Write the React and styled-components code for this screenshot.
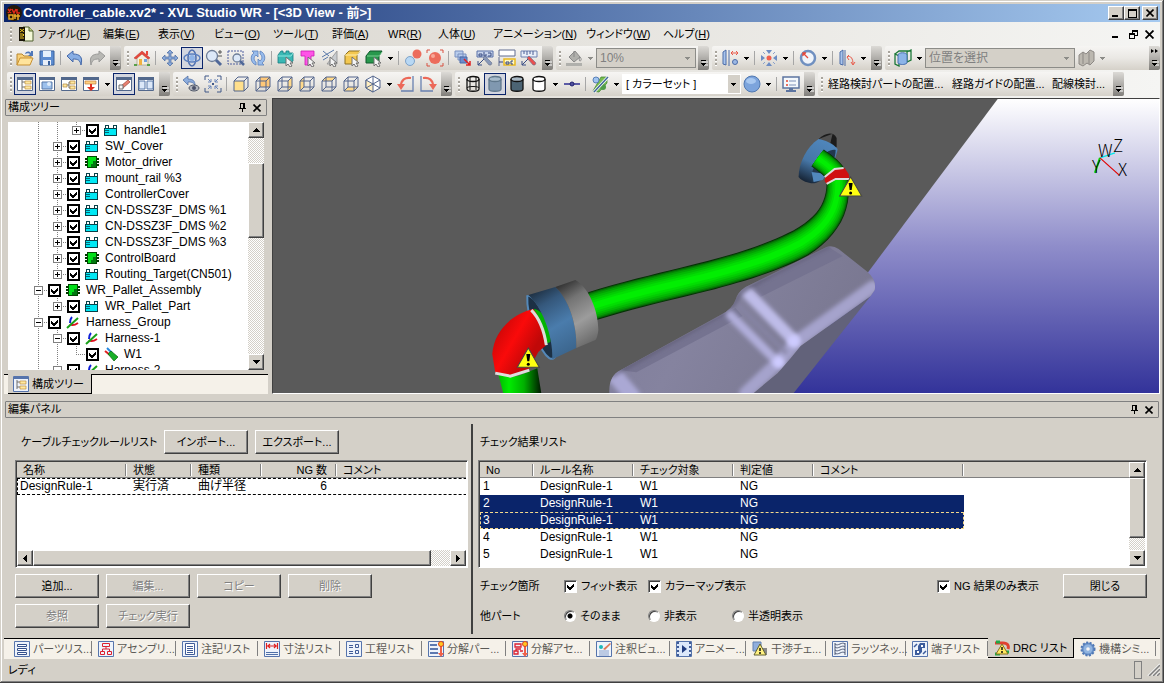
import React from "react";
import styled, { createGlobalStyle, css } from "styled-components";

const FACE = "#d4d0c8";
const SHADOW = "#808080";
const DARK = "#404040";
const NAVY = "#0a246a";

const svgUrl = (body, w, h) =>
  `url("data:image/svg+xml,${encodeURIComponent(
    `<svg xmlns='http://www.w3.org/2000/svg' width='${w}' height='${h}' shape-rendering='crispEdges'>${body}</svg>`
  )}")`;

const CHECK = svgUrl(
  "<path d='M0 2v3l2 2h1l4-4V0L3 4H2z' fill='black'/>",
  7,
  7
);
const arrowDown = (color) =>
  svgUrl(`<path d='M0 0h5v1H4v1H3v1H2V2H1V1H0z' fill='${color}'/>`, 5, 3);

const GlobalStyle = createGlobalStyle`
  * {
    box-sizing: border-box;
  }

  body {
    margin: 0;
    background: ${FACE};
    color: #000;
    font: 11px/16px "Liberation Sans", "Noto Sans CJK JP", sans-serif;
    font-feature-settings: "palt";
  }

  button, select, input {
    margin: 0;
    font: inherit;
    font-feature-settings: inherit;
    color: inherit;
  }
`;

/* ---------- toolbar icons, all on an 18px grid ---------- */

const Cube = ({ face }) => (
  <>
    {face === "front" && <path d="M2 6h10v10H2z" fill="#ffdf8c" />}
    {face === "back" && <path d="M6 2h10v10H6z" fill="#ffc878" />}
    {face === "left" && <path d="M2 6l4-4v10l-4 4z" fill="#ffd98a" />}
    {face === "right" && <path d="M12 6l4-4v10l-4 4z" fill="#ffd98a" />}
    {face === "top" && <path d="M2 6l4-4h10l-4 4z" fill="#ffd98a" />}
    {face === "bottom" && <path d="M2 16l4-4h10l-4 4z" fill="#ffd98a" />}
    <path
      d="M2 6h10v10H2zM2 6l4-4h10l-4 4M16 2v10l-4 4"
      fill="none"
      stroke="#52658c"
    />
    {face !== "front" && (
      <path d="M6 2v10h10M6 12l-4 4" fill="none" stroke="#52658c" />
    )}
  </>
);

const Cursor = () => (
  <path
    d="M9 8v9l2-2 2 3 2-1-2-3h3z"
    fill="#f4f4f4"
    stroke="#707070"
    strokeWidth="1"
  />
);

const Pencil = ({ x = 0, color = "#8898b8" }) => (
  <path d={`M${7 + x} 9l2-2 7 7-1 2-2 0z`} fill={color} stroke="#68708c" strokeWidth=".6" />
);

const Panel = ({ children }) => (
  <>
    <path d="M1.500 2.500h15v13h-15z" fill="#fff" stroke="#52688c" />
    <path d="M1 2h16v3H1z" fill="#52688c" />
    {children}
  </>
);

const Cylinder = ({ fill, stroke = "#111", top = fill, line }) => (
  <>
    <path
      d="M3 4v10c0 3 12 3 12 0V4"
      fill={fill}
      stroke={stroke}
      strokeWidth="1.300"
    />
    <ellipse cx="9" cy="4" rx="6" ry="2.500" fill={top} stroke={stroke} strokeWidth="1.300" />
    {line && (
      <path
        d="M6 2v13M12 2v13M3 13c0-2 12-2 12 0"
        fill="none"
        stroke={stroke}
      />
    )}
  </>
);

const icons = {
  open: (
    <>
      <path d="M1 16V5h5l2 2h7v3" fill="#f8d078" stroke="#b88830" />
      <path d="M1 16l3-7h13l-3 7z" fill="#ffe49c" stroke="#c89030" />
      <path d="M9 5c1-3 4-3 6-1V2l2 0v5h-5l2-2c-1-1-3-1-5 0z" fill="#5078b8" />
    </>
  ),
  save: (
    <>
      <path d="M2 2h14v14H2z" fill="#5c8cd0" stroke="#38609c" />
      <path d="M5 2h8v6H5z" fill="#e4f0fc" />
      <path d="M5 11h8v5H5z" fill="#e8eef8" />
      <path d="M10 12h2v4h-2z" fill="#38609c" />
    </>
  ),
  undo: (
    <path
      d="M1 7l6-5v3c7 0 10 3 8 11-1-5-3-6-8-6v3z"
      fill="#88aee4"
      stroke="#4468a8"
    />
  ),
  redo: (
    <path
      d="M17 7l-6-5v3c-7 0-10 3-8 11 1-5 3-6 8-6v3z"
      fill="#b8b8b4"
      stroke="#9a9a98"
    />
  ),
  home: (
    <>
      <path d="M4 8v8h11V8L9 4z" fill="#f4f0e0" stroke="#a09880" strokeWidth=".7" />
      <path d="M1 9l8-7 8 7-2 1-6-5-6 5z" fill="#e8483c" stroke="#b83028" strokeWidth=".5" />
      <path d="M13 2h2v4h-2z" fill="#e8483c" />
      <path d="M6 10h3v6H6z" fill="#f0b040" />
      <path d="M11 10h3v3h-3z" fill="#70a0e0" />
      <path d="M1 15h3v2H1zM14 15h3v2h-3z" fill="#58a048" />
    </>
  ),
  move: (
    <path
      d="M9 1l3 3h-2v4h4V6l3 3-3 3v-2h-4v4h2l-3 3-3-3h2v-4H4v2L1 9l3-3v2h4V4H6z"
      fill="#88a8d8"
      stroke="#4868a0"
      strokeWidth=".7"
    />
  ),
  rotate: (
    <>
      <circle cx="9" cy="9" r="3" fill="#8fb4e8" />
      <ellipse cx="9" cy="9" rx="4" ry="8" fill="none" stroke="#5070b0" strokeWidth="1.500" />
      <ellipse cx="9" cy="9" rx="8" ry="4" fill="none" stroke="#5c80c0" strokeWidth="1.500" />
    </>
  ),
  zoom: (
    <>
      <circle cx="7" cy="7" r="5.500" fill="#dce8f8" stroke="#6e7e98" strokeWidth="1.300" />
      <path d="M11 11l5 5" stroke="#506898" strokeWidth="3" />
      <path d="M13 3h4M15 1v4M13 7h4" stroke="#555" />
    </>
  ),
  zoomArea: (
    <>
      <path d="M1 2h15v13H1z" fill="none" stroke="#5060a0" strokeDasharray="2 1" />
      <circle cx="10" cy="9" r="4" fill="#dce8f8" stroke="#6e7e98" strokeWidth="1.300" />
      <path d="M13 12l4 4" stroke="#506898" strokeWidth="2.500" />
    </>
  ),
  reload: (
    <>
      <path d="M7 16C1 14 1 6 5 4L3 2h6v6L7 6c-3 2-2 6 0 7z" fill="#98bcec" stroke="#5c80bc" strokeWidth=".8" />
      <path d="M11 2c6 2 6 10 2 12l2 2H9v-6l2 2c3-2 2-6 0-7z" fill="#98bcec" stroke="#5c80bc" strokeWidth=".8" />
    </>
  ),
  pickPart: (
    <>
      <path d="M1 6l3-4h2v2h3V2h3v2h4v8l-3 2H1z" fill="#3ab8b4" stroke="#187c80" strokeWidth=".8" />
      <path d="M1 7h13l2-3" fill="none" stroke="#8ce8e0" />
      <Cursor />
    </>
  ),
  pickShape: (
    <>
      <path d="M2 2h13v5h-3v9H6V7H2z" fill="#ff54e8" stroke="#c820b0" strokeWidth=".8" />
      <Cursor />
    </>
  ),
  pickLine: (
    <>
      <path d="M16 2v13H6z" fill="#c8ccd0" stroke="#909090" strokeWidth=".8" />
      <path d="M2 2l6 5M1 8L13 1M2 11l5-3" stroke="#5878a8" />
      <Cursor />
    </>
  ),
  pickFace: (
    <>
      <path d="M2 6l4-4h11l-3 4v9H2z" fill="#f4c850" stroke="#8c7020" />
      <path d="M2 6h12l3-4" fill="none" stroke="#fff0b0" />
      <Cursor />
    </>
  ),
  pickBody: (
    <>
      <path d="M1 7l4-5h12l-3 5v7H1z" fill="#28984c" stroke="#10582c" />
      <path d="M2 7h12l3-4" fill="none" stroke="#78d090" />
      <Cursor />
    </>
  ),
  balls: (
    <>
      <circle cx="13" cy="5" r="4.500" fill="#ec6c5c" />
      <circle cx="6" cy="12" r="4.500" fill="#b8d8f4" stroke="#6c94c0" strokeWidth=".8" />
    </>
  ),
  ballFit: (
    <>
      <circle cx="9" cy="9" r="6" fill="#ec6c5c" />
      <circle cx="7" cy="7" r="2" fill="#f8a898" />
      <path d="M1 4V1h3M14 1h3v3M17 14v3h-3M4 17H1v-3" fill="none" stroke="#d85040" />
    </>
  ),
  layers: (
    <>
      <path d="M1 2h8v6H1zM4 5h8v6H4z" fill="#b8ccec" stroke="#7890c0" />
      <path d="M6 8h7v6H6z" fill="#6c8ccc" stroke="#4868a8" />
      <path d="M10 10l6 6M16 12v4h-4" stroke="#e02020" strokeWidth="1.500" fill="none" />
    </>
  ),
  noteEdit: (
    <>
      <path d="M1 2h16v6H1z" fill="#c8d4ec" stroke="#5870a8" />
      <path d="M3 5h3v2H3zM8 3v4h2V5M12 4h3v3h-3" fill="none" stroke="#384c84" />
      <path d="M2 16l6-6M2 12v4h4" fill="none" stroke="#384c84" />
      <Pencil />
    </>
  ),
  noteLabel: (
    <>
      <path d="M1 1h16v6H1z" fill="#fff" stroke="#606c90" />
      <path d="M1 8v9" stroke="#606c90" />
      <path d="M6 10h11v6H6z" fill="#fff8c0" stroke="#e8b820" strokeWidth="1.500" />
      <path d="M8 13h3v2H8zM15 12h-2v3h2M1 13h4" fill="none" stroke="#304080" />
    </>
  ),
  measure: (
    <>
      <path d="M1 2h16v6H1z" fill="#e8eef8" stroke="#6c80b0" />
      <path d="M4 2v3M7 2v4M10 2v3M13 2v4" stroke="#485c94" />
      <path d="M2 16l6-6M2 12v4h4" fill="none" stroke="#384c84" />
      <Pencil color="#e85050" />
    </>
  ),
  bucket: (
    <>
      <path d="M4 8l6-6 5 6-6 5z" fill="#b0b0ac" stroke="#888" />
      <path d="M9 2v6M15 8c2 2 1 4 0 4s-1-2 0-4" fill="none" stroke="#888" />
      <path d="M1 14h16v3H1z" fill="#b0b0ac" />
    </>
  ),
  alignGap: (
    <>
      <path d="M2 3l3-2v15l-3-1z" fill="#a8c4ec" stroke="#4c6ca8" />
      <path d="M8 1v16" stroke="#4c6ca8" />
      <path d="M10 4h7M12 2l-2 2 2 2M15 2l2 2-2 2" fill="none" stroke="#e85848" />
      <circle cx="14" cy="13" r="2.500" fill="#9cb8e4" stroke="#4c6ca8" />
    </>
  ),
  gather: (
    <>
      <path d="M6 1h6L9 5zM6 17h6l-3-4zM1 6v6l4-3zM17 6v6l-4-3z" fill="#6c8cc4" />
      <circle cx="9" cy="9" r="2.500" fill="#f06050" />
      <path d="M3 3l2 2M15 3l-2 2M3 15l2-2M15 15l-2-2" stroke="#88a0cc" />
    </>
  ),
  dial: (
    <>
      <circle cx="9" cy="9" r="7" fill="#f0f4fa" stroke="#7090c0" strokeWidth="2.500" />
      <path d="M9 9L4 4M4 7V4h3" stroke="#e84838" strokeWidth="1.300" fill="none" />
    </>
  ),
  alignTurn: (
    <>
      <path d="M2 3l3-2v15l-3-1z" fill="#a8c4ec" stroke="#4c6ca8" />
      <path d="M7 1v16" stroke="#4c6ca8" />
      <path d="M9 8c4-2 6 2 6 7M11 6L9 8l2 3M13 13l2 3 2-3" fill="none" stroke="#e85848" />
    </>
  ),
  section: (
    <>
      <path d="M1 5l4 2v10l-4-2zM13 3l4-2v10l-4 2zM1 5l4-3h12" fill="none" stroke="#1c7838" strokeWidth="1.300" />
      <path d="M4 6c0-3 9-3 9 0v8c-2 2-7 2-9 0z" fill="#8cb4e8" stroke="#4870b0" />
    </>
  ),
  sectionOff: (
    <>
      <path d="M2 6l4-3 3 2 4-4 4 2v9l-4 4-3-2-4 3-4-2z" fill="#bcb8b0" stroke="#8c8884" />
      <path d="M6 3v12M12 3v12" stroke="#8c8884" />
    </>
  ),
  winTree: (
    <Panel>
      <path d="M6 5v10M6 7h3M6 12h3" fill="none" stroke="#707070" />
      <path d="M9 6h6v3H9zM9 11h6v3H9z" fill="#ffe8a0" stroke="#c09040" strokeWidth=".7" />
    </Panel>
  ),
  winImage: (
    <Panel>
      <path d="M4 7h10v7H4z" fill="#9cc0ec" stroke="#5878a8" />
      <circle cx="11" cy="9" r="2" fill="#e0ecfa" />
    </Panel>
  ),
  winFlow: (
    <Panel>
      <path d="M6 10h3V7h2M9 10v3h2" fill="none" stroke="#707070" />
      <path d="M3 9h4v3H3zM10 6h5v3h-5zM10 11h5v3h-5z" fill="#ffe8a0" stroke="#b08840" strokeWidth=".7" />
    </Panel>
  ),
  winDown: (
    <Panel>
      <path d="M3 6h11v3H3z" fill="#ffd080" stroke="#c08040" strokeWidth=".7" />
      <path d="M8 9h2v3h3l-4 4-4-4h3z" fill="#e03020" />
    </Panel>
  ),
  winEdit: (
    <Panel>
      <path d="M6 11l7-6 2 2-7 6z" fill="#e88070" stroke="#984838" strokeWidth=".7" />
      <path d="M4 10h4v4H4z" fill="#f4f4f4" stroke="#707070" />
    </Panel>
  ),
  winBook: (
    <Panel>
      <path d="M2 6h6v8H2zM10 6h6v8h-6z" fill="#dce8f8" stroke="#5878a8" />
    </Panel>
  ),
  look: (
    <>
      <path d="M1 5l5-4v3c5 0 7 2 7 6-2-3-4-3-7-3v3z" fill="#8cacdc" stroke="#4868a0" strokeWidth=".7" />
      <ellipse cx="12" cy="13" rx="5" ry="3" fill="#b0b4bc" stroke="#505868" />
      <circle cx="12" cy="13" r="2" fill="#485068" />
    </>
  ),
  fit: (
    <>
      <path d="M1 5V1h4M13 1h4v4M17 13v4h-4M5 17H1v-4" fill="none" stroke="#405888" />
      <path d="M4 4l3 3M14 4l-3 3M4 14l3-3M14 14l-3-3M4 7h3V4M11 4v3h3M4 11h3v3M11 14v-3h3" fill="none" stroke="#6c88bc" />
      <path d="M8 8h2v2H8z" fill="#405888" />
    </>
  ),
  front: <Cube face="front" />,
  back: <Cube face="back" />,
  left: <Cube face="left" />,
  right: <Cube face="right" />,
  top: <Cube face="top" />,
  bottom: <Cube face="bottom" />,
  iso: (
    <>
      <path d="M9 1l7 4v8l-7 4-7-4V5z" fill="#fff" stroke="#52658c" />
      <path d="M2 5l7 4v8l-7-4z" fill="#ffeec0" stroke="#52658c" />
      <path d="M9 9l7-4M9 9V1M9 9l7 4M9 9l-7 4" fill="none" stroke="#52658c" />
    </>
  ),
  turnLeft: (
    <>
      <path d="M16 1v15H4" fill="none" stroke="#6880b0" strokeWidth="1.300" />
      <path d="M14 3C8 2 4 5 4 11" fill="none" stroke="#ec6858" strokeWidth="2.200" />
      <path d="M0 9h8l-4 6z" fill="#ec6858" />
    </>
  ),
  turnRight: (
    <>
      <path d="M2 1v15h12" fill="none" stroke="#6880b0" strokeWidth="1.300" />
      <path d="M4 3c6-1 10 2 10 8" fill="none" stroke="#ec6858" strokeWidth="2.200" />
      <path d="M10 9h8l-4 6z" fill="#ec6858" />
    </>
  ),
  wire: <Cylinder fill="none" line />,
  shade: <Cylinder fill="#8098b0" top="#a8bccc" stroke="#60788c" />,
  shadeEdge: <Cylinder fill="#4c6474" top="#a8b8c4" />,
  hidden: <Cylinder fill="#fff" />,
  point: (
    <>
      <path d="M1 9h16" stroke="#2c2c90" strokeWidth="1.300" />
      <circle cx="9" cy="9" r="2" fill="#50509c" stroke="#202070" />
    </>
  ),
  colorMap: (
    <>
      <path d="M2 16l8-14h6v6L8 17z" fill="#78bc50" stroke="#388028" strokeWidth=".7" />
      <circle cx="5" cy="5" r="3" fill="#a0c4f0" stroke="#5880b8" />
      <circle cx="12" cy="12" r="3" fill="#509c48" />
      <path d="M3 17L17 2" stroke="#fff" strokeWidth="3" />
      <path d="M3 17L17 2" stroke="#406898" strokeWidth="1.500" />
    </>
  ),
  ball: (
    <>
      <circle cx="9" cy="9" r="8" fill="#7ca4dc" stroke="#5078b0" />
      <ellipse cx="8" cy="6" rx="5" ry="3" fill="#a8c8f0" />
    </>
  ),
  monitor: (
    <>
      <path d="M1 2h16v11H1z" fill="#f4f8fc" stroke="#5c74a0" strokeWidth="1.500" />
      <path d="M4 5h2v2H4zM4 9h2v2H4z" fill="#e87060" />
      <path d="M7 6h7M7 10h7" stroke="#7c90b8" />
      <path d="M7 13h4v2h3v2H4v-2h3z" fill="#5c74a0" />
    </>
  ),
};

/* ---------- list tab icons, 16px grid ---------- */

const tabFrame = (
  <path d="M.5.5h15v15H.5z" fill="#eef3fb" stroke="#5674ac" />
);

const tabIcons = {
  parts: (
    <>
      {tabFrame}
      <path d="M3.500 3.500h9v2h-9zM3.500 7.500h9v2h-9zM3.500 11.500h9v2h-9z" fill="#fff" stroke="#34508c" />
    </>
  ),
  assembly: (
    <>
      {tabFrame}
      <path d="M4.500 2.500h7v3h-7zM2.500 10.500h4v3h-4zM9.500 10.500h4v3h-4zM8 6v2M4.500 10V8h7v2" fill="none" stroke="#dc2030" />
    </>
  ),
  notes: (
    <>
      {tabFrame}
      <path d="M3.500 2.500h9v11h-9z" fill="#fff" stroke="#405c98" />
      <path d="M5 5.500h6M5 7.500h6M5 9.500h6M5 11.500h6" stroke="#405c98" />
    </>
  ),
  dims: (
    <>
      {tabFrame}
      <path d="M2.500 2v6M13.500 2v6M3 5h10M6 3L4 5l2 2M10 3l2 2-2 2" fill="none" stroke="#e02020" strokeWidth="1.200" />
      <path d="M2 11.500h12M2 13.500h12" stroke="#5070a8" />
    </>
  ),
  process: (
    <>
      {tabFrame}
      <path d="M3 4.500h4M3 6.500h4M3 10.500h4M3 12.500h4" stroke="#405c98" />
      <path d="M9.500 3.500h3v3h-3zM9.500 9.500h3v3h-3z" fill="none" stroke="#405c98" />
    </>
  ),
  explodeParts: (
    <>
      {tabFrame}
      <path d="M2 3h7v2H2zM2 7h8v2H2zM2 11h8v2H2z" fill="#5c78b0" />
      <path d="M12 5h2v7h2l-3 4-3-4h2z" fill="#f06048" />
      <circle cx="13" cy="3" r="2.500" fill="#ffc820" stroke="#e04020" />
    </>
  ),
  explodeAsm: (
    <>
      {tabFrame}
      <path d="M3 3h6v3H3zM2 10h4v3H2zM8 10h3M4 10V8h5" fill="none" stroke="#dc2030" strokeWidth="1.300" />
      <path d="M12 5h2v7h2l-3 4-3-4h2z" fill="#f06048" />
      <circle cx="13" cy="3" r="2.500" fill="#ffc820" stroke="#e04020" />
    </>
  ),
  annotView: (
    <>
      {tabFrame}
      <path d="M3 10h10M3 12h10M3 14h10" stroke="#88a0cc" />
      <circle cx="5" cy="6" r="2" fill="#20b8b8" />
      <path d="M7 8l7-6 1 1-6 6z" fill="#e07858" />
    </>
  ),
  anime: (
    <>
      <path d="M.5.5h15v15H.5z" fill="#dce8fa" stroke="#5674ac" />
      <path d="M2 1v14M14 1v14" stroke="#405c98" strokeDasharray="2 2" strokeWidth="2" />
      <path d="M6 4l5 4-5 4z" fill="#203c80" />
    </>
  ),
  clash: (
    <>
      <path d="M1 1h8v9H1z" fill="#90aedc" stroke="#6080b0" />
      <path d="M10 7h5v7h-5z" fill="#888" />
      <path d="M8 3l6 11H2z" fill="#fff080" stroke="#606030" />
      <path d="M8 7v3M8 11v2" stroke="#111" strokeWidth="1.500" />
    </>
  ),
  ratsnest: (
    <>
      {tabFrame}
      <path d="M3 3c3 3 7-3 10 0M3 6c3 3 7-3 10 0M3 9c3 3 7-3 10 0M3 12c3 3 7-3 10 0M3 2v12M13 2v12" fill="none" stroke="#505c78" />
    </>
  ),
  terminal: (
    <>
      {tabFrame}
      <path d="M8 2h5v5h-3v4L7 14H3V9h3V5z" fill="#3c5c9c" />
      <path d="M9 4h2v2H9zM5 10h2v2H5z" fill="#fff" />
      <path d="M2 6l3-3M11 13l3-3" stroke="#3c5c9c" strokeWidth="1.500" />
    </>
  ),
  drc: (
    <>
      <path d="M1 3h8c5 0 6 3 5 6" fill="none" stroke="#e04030" strokeWidth="3" />
      <path d="M2 2h4M12 12h3M1 14h5" stroke="#20a848" strokeWidth="3" />
      <path d="M8 4l6 10H2z" fill="#ffe860" stroke="#887020" />
      <path d="M8 7v3M8 11v2" stroke="#111" strokeWidth="1.500" />
    </>
  ),
  gear: (
    <>
      <circle cx="8" cy="8" r="6.500" fill="#6890c8" stroke="#5078b4" strokeWidth="2" strokeDasharray="2 1.500" />
      <circle cx="8" cy="8" r="4.500" fill="#90b4e0" />
      <circle cx="8" cy="8" r="1.800" fill="#f4f4f4" />
    </>
  ),
  tree: (
    <>
      {tabFrame}
      <path d="M1 1h14v2H1z" fill="#5674ac" />
      <path d="M4 4v9M4 6h3M4 11h3" fill="none" stroke="#707070" />
      <path d="M7 5h6v3H7zM7 10h6v3H7z" fill="#ffe8a0" stroke="#c09040" strokeWidth=".7" />
    </>
  ),
};

const treeIcons = {
  part: (
    <g shapeRendering="crispEdges">
      <path d="M1 2h4v3H1zM9 2h4v3H9zM0 5h13v8H0z" fill="#084048" />
      <path d="M2 3h2v2H2zM10 3h2v2h-2z" fill="#fff" />
      <path d="M1 6h11v6H1z" fill="#00e8f4" />
      <path d="M1 7h4v1H1zM1 9h4v1H1z" fill="#006878" />
    </g>
  ),
  assy: (
    <g shapeRendering="crispEdges">
      <path d="M0 3h14v2H0zM0 6h14v2H0zM0 9h14v2H0z" fill="#003800" />
      <path d="M2 1h10v12H2z" fill="#004800" />
      <path d="M3 2h8v10H3z" fill="#00e018" />
      <path d="M6 12V9h2V6h3v6z" fill="#007810" />
    </g>
  ),
  harness: (
    <>
      <path d="M6 2c-2 2-2 3-2 6" fill="none" stroke="#1020d8" strokeWidth="2" />
      <path d="M4 9c2 2 5 1 8-1" fill="none" stroke="#e01020" strokeWidth="2" />
      <path d="M1 13L12 3" stroke="#18a018" strokeWidth="2" />
    </>
  ),
  wire: (
    <>
      <path d="M1 4l5 4" stroke="#e02020" strokeWidth="2" />
      <path d="M3 1l5 5" stroke="#2888e0" strokeWidth="2" />
      <path d="M4 7l3-3 7 6-4 4z" fill="#18b028" stroke="#086010" strokeWidth=".7" />
    </>
  ),
};

const Svg = styled.svg`
  display: block;
  flex: none;
`;

const Icon = ({ name }) => (
  <Svg width="18" height="18" viewBox="0 0 18 18" aria-hidden="true">
    {icons[name]}
  </Svg>
);

/* ---------- window frame ---------- */

const Window = styled.div`
  display: flex;
  flex-direction: column;
  height: 100vh;
  min-height: 560px;
  padding: 4px 4px 3px;
  background: ${FACE};
  box-shadow: inset -1px -1px ${DARK}, inset 1px 1px ${FACE},
    inset -2px -2px ${SHADOW}, inset 2px 2px #fff;
  overflow: hidden;
`;

const TitleBar = styled.header`
  display: flex;
  align-items: center;
  flex: none;
  height: 18px;
  padding: 0 2px;
  background: linear-gradient(90deg, ${NAVY}, #a6caf0);
  color: #fff;

  h1 {
    flex: 1;
    margin: 0 0 0 1px;
    font-size: 13px;
    line-height: 18px;
    white-space: nowrap;
  }
`;

const raised = css`
  border: 1px solid;
  border-color: #fff ${DARK} ${DARK} #fff;
  box-shadow: inset -1px -1px ${SHADOW};
  background: ${FACE};
`;

const sunken = css`
  border: 1px solid;
  border-color: ${SHADOW} #fff #fff ${SHADOW};
  box-shadow: inset 1px 1px ${DARK};
`;

const CaptionButton = styled.button`
  ${raised}
  display: grid;
  place-items: center;
  width: 16px;
  height: 14px;
  padding: 0;
  margin-left: ${({ $spaced }) => ($spaced ? "2px" : 0)};
`;

const MenuBar = styled.nav`
  display: flex;
  align-items: center;
  flex: none;
  height: 24px;
  padding: 0 4px 0 3px;
  background: linear-gradient(90deg, #d6d2ca, #f5f5f3);
`;

const MenuItem = styled.button`
  flex: none;
  width: ${({ $width }) => $width}px;
  padding: 0;
  border: 0;
  background: none;
  text-align: left;
  white-space: nowrap;
`;

const FlatButton = styled.button`
  display: grid;
  place-items: center;
  width: ${({ $width }) => $width || 18}px;
  height: 16px;
  padding: 0;
  border: 0;
  background: none;
`;

const Spacer = styled.div`
  flex: 1;
`;

/* ---------- toolbars ---------- */

const ToolbarArea = styled.div`
  display: grid;
  gap: 2px;
  flex: none;
  padding: 0 0 2px 3px;
  background: linear-gradient(90deg, #d6d2ca, #f5f5f3);
`;

const ToolbarRow = styled.div`
  display: flex;
  gap: 3px;
  height: 24px;
`;

const Toolbar = styled.div`
  display: flex;
  align-items: center;
  flex: ${({ $grow }) => ($grow ? "1" : "none")};
  min-width: 0;
  border-radius: 2px;
  background: linear-gradient(#f6f5f3, #eae8e4 50%, #d5d1c9);
  overflow: hidden;
`;

const Grip = styled.span`
  flex: none;
  width: 7px;
  height: 15px;
  background: repeating-linear-gradient(#a8a49c 0 2px, #fff 2px 3px, transparent 3px 4px)
    3px 0 / 2px 100% no-repeat;
`;

const ToolButton = styled.button`
  display: grid;
  place-items: center;
  flex: none;
  width: 22px;
  height: 22px;
  padding: 0;
  border: 1px solid ${({ $active }) => ($active ? NAVY : "transparent")};
  background: ${({ $active }) => ($active ? "#d3d6df" : "none")};
`;

const TextButton = styled.button`
  flex: none;
  width: ${({ $width }) => $width}px;
  padding: 0 0 0 3px;
  border: 0;
  background: none;
  text-align: left;
  white-space: nowrap;
`;

const Caret = styled.button`
  flex: none;
  width: 11px;
  height: 22px;
  padding: 0;
  border: 0;
  background: ${({ disabled }) => arrowDown(disabled ? "#8c8c88" : "#000")} center
    no-repeat;
`;

const Separator = styled.span`
  flex: none;
  width: 6px;
  height: 14px;
  background: linear-gradient(#a6a6a6, #a6a6a6) 2px 0 / 1px 100% no-repeat;
`;

const Overflow = styled.button`
  display: grid;
  justify-items: center;
  align-content: end;
  flex: none;
  width: 11px;
  height: 24px;
  margin-left: 2px;
  padding: 0 0 3px;
  border: 0;
  background: linear-gradient(#dcdad6, #a8a6a2 60%, #807e7a);
`;

const ToolSelect = styled.select`
  flex: none;
  width: ${({ $width }) => $width}px;
  height: 20px;
  padding: 0 14px 0 3px;
  border: 1px solid ${({ disabled }) => (disabled ? "#8c8c88" : "#fff")};
  border-radius: 0;
  appearance: none;
  background: ${({ disabled }) =>
    disabled
      ? `${arrowDown("#8c8c88")} right 5px center no-repeat ${FACE}`
      : `${arrowDown("#000")} right 4px center no-repeat, linear-gradient(${FACE}, ${FACE}) right / 12px 100% no-repeat #fff`};
  color: ${({ disabled }) => (disabled ? "#808080" : "#000")};
  font-size: ${({ disabled }) => (disabled ? "12px" : "11px")};
  opacity: 1;
`;

const More = ({ wide }) => (
  <Overflow aria-label="ツールバー オプション">
    <Svg width="9" height={wide ? 18 : 7} viewBox={`0 0 9 ${wide ? 18 : 7}`} aria-hidden="true">
      {wide && <path d="M1 0l3 2-3 2zM5 0l3 2-3 2z" fill="#000" />}
      <g transform={`translate(0 ${wide ? 11 : 0})`}>
        <path d="M3 2h6M4 5h5" stroke="#fff" />
        <path d="M2 0h5v1H2zM2 3h5v1H6v1H5v1H4V5H3V4H2z" fill="#000" />
      </g>
    </Svg>
  </Overflow>
);

const Tools = ({ items }) =>
  items.map((item, i) => {
    if (item === "|") return <Separator key={i} />;
    if (item === "v") return <Caret key={i} aria-label="メニュー" />;
    const active = item.startsWith("*");
    const name = active ? item.slice(1) : item;
    return (
      <ToolButton key={i} $active={active} aria-label={name} aria-pressed={active}>
        <Icon name={name} />
      </ToolButton>
    );
  });

/* ---------- docked panes ---------- */

const Main = styled.main`
  display: flex;
  flex: 1;
  gap: 4px;
  min-height: 0;
`;

const TreePane = styled.section`
  display: flex;
  flex-direction: column;
  flex: none;
  width: 264px;
  padding-top: 1px;
`;

const PaneHeader = styled.div`
  display: flex;
  align-items: center;
  flex: none;
  height: 17px;
  margin: 0 1px;
  padding: 0 2px;
  border: 1px solid ${SHADOW};
  border-radius: 1px;

  h2 {
    flex: 1;
    margin: 0;
    font-size: 11px;
    font-weight: normal;
    line-height: 15px;
  }
`;

const TreeFrame = styled.div`
  display: flex;
  flex: 1;
  min-height: 0;
  margin: 6px 4px 4px;
  background: #fff;
`;

const Tree = styled.ul`
  flex: 1;
  margin: 0;
  padding: 0 0 0 21px;
  font-size: 12px;
  list-style: none;
  overflow: hidden;
`;

const TreeRow = styled.li`
  display: flex;
  align-items: center;
  height: 16px;

  label {
    display: flex;
    align-items: center;
    gap: 5px;
    white-space: nowrap;
  }
`;

const vDots = "repeating-linear-gradient(#808080 0 1px, transparent 1px 2px)";
const hDots = "repeating-linear-gradient(90deg, #808080 0 1px, transparent 1px 2px)";

const Guide = styled.span`
  display: grid;
  place-items: center start;
  flex: none;
  width: 19px;
  height: 16px;
  padding-left: 5px;
  background-repeat: no-repeat;
  background-image: ${({ $line }) =>
    ({ through: vDots, node: `${vDots}, ${hDots}`, end: `${vDots}, ${hDots}` }[$line] ||
    "none")};
  background-position: 9px 0, 9px 8px;
  background-size: ${({ $line }) => ($line === "end" ? "1px 8px" : "1px 100%")}, 10px 1px;
`;

const Expander = styled.button`
  display: grid;
  place-items: center;
  width: 9px;
  height: 9px;
  padding: 0;
  border: 1px solid ${SHADOW};
  background: #fff;
`;

const TreeCheck = styled.input.attrs({ type: "checkbox" })`
  width: 13px;
  height: 13px;
  appearance: none;
  border: 2px solid #000;
  background: #fff ${CHECK} center no-repeat;
`;

const VScroll = styled.div`
  display: flex;
  flex-direction: column;
  flex: none;
  width: 16px;
  background: repeating-conic-gradient(#fff 0 25%, ${FACE} 0 50%) 0 0 / 2px 2px;
`;

const HScroll = styled(VScroll)`
  flex-direction: row;
  width: auto;
  height: 16px;
`;

const ScrollButton = styled.button`
  ${raised}
  display: grid;
  place-items: center;
  flex: none;
  width: 16px;
  height: 16px;
  padding: 0;
`;

const Thumb = styled.div`
  ${raised}
  flex: ${({ $size }) => $size} 1 0;
`;

const Track = styled.div`
  flex: ${({ $size }) => $size} 1 0;
`;

const arrows = {
  up: "M3 0h1v1h1v1h1v1h1v1H0V3h1V2h1V1h1z",
  down: "M0 0h7v1H6v1H5v1H4v1H3V3H2V2H1V1H0z",
  left: "M4 0v7H3V6H2V5H1V4H0V3h1V2h1V1h1V0z",
  right: "M0 0h1v1h1v1h1v1h1v1H3v1H2v1H1v1H0z",
};

const Arrow = ({ dir }) => (
  <ScrollButton aria-label={dir}>
    <Svg
      width={dir === "up" || dir === "down" ? 7 : 4}
      height={dir === "up" || dir === "down" ? 4 : 7}
      shapeRendering="crispEdges"
      aria-hidden="true"
    >
      <path d={arrows[dir]} />
    </Svg>
  </ScrollButton>
);

const PaneTabs = styled.div`
  display: flex;
  flex: none;
  height: 20px;
  padding-left: 4px;
  background: #f5f1e9;
  border-top: 1px solid #000;
`;

const PaneTab = styled.button`
  display: flex;
  align-items: center;
  gap: 3px;
  width: 84px;
  height: 20px;
  margin-top: -1px;
  padding: 0 5px;
  border: solid #000;
  border-width: 0 1px 1px 0;
  background: ${FACE};
  white-space: nowrap;
`;

const View = styled.section`
  flex: 1;
  min-width: 0;
  border: 1px solid;
  border-color: ${DARK} #fff #fff ${DARK};
  background: linear-gradient(#fff, #8f8dca 50%, #33339a);

  svg {
    display: block;
    width: 100%;
    height: 100%;
  }
`;

/* ---------- edit panel ---------- */

const EditPanel = styled.section`
  flex: none;
  margin-top: 7px;
`;

const EditBody = styled.div`
  display: grid;
  grid-template-columns: 467fr 3px 686fr;
  padding: 6px 0 4px;
`;

const Divider = styled.div`
  background: linear-gradient(90deg, ${DARK} 2px, ${FACE} 2px);
`;

const Column = styled.div`
  display: flex;
  flex-direction: column;
  gap: 6px;
  min-width: 0;
  padding: 6px ${({ $right }) => ($right ? "13px 6px 4px" : "3px 6px 11px")};
`;

const Line = styled.div`
  display: flex;
  align-items: center;
  gap: 7px;
  height: 24px;
`;

const Caption = styled.span`
  flex: none;
  width: ${({ $width }) => $width || "auto"};
  padding-left: ${({ $inset }) => $inset || 0}px;
  white-space: nowrap;
`;

const PushButton = styled.button`
  ${raised}
  flex: none;
  width: 84px;
  height: 24px;
  padding: 0;
  white-space: nowrap;

  &:disabled {
    color: ${SHADOW};
    text-shadow: 1px 1px #fff;
  }
`;

const ListFrame = styled.div`
  ${sunken}
  display: flex;
  flex-direction: ${({ $column }) => ($column ? "column" : "row")};
  height: 108px;
  padding: 1px;
  background: #fff;
`;

const ListView = styled.div`
  flex: 1;
  min-height: 0;
  min-width: 0;
  overflow: hidden;
  background: linear-gradient(${FACE} 15px, ${SHADOW} 15px 16px, transparent 16px);
`;

const Table = styled.table`
  width: ${({ $width }) => $width}px;
  table-layout: fixed;
  border-collapse: collapse;

  th,
  td {
    height: 17px;
    padding: 0 7px 0 3px;
    font-weight: normal;
    line-height: 15px;
    text-align: left;
    white-space: nowrap;
  }

  th {
    height: 16px;
    padding: 0 7px 0 6px;
    background: linear-gradient(${SHADOW}, ${SHADOW}) right 1px top 2px / 1px 12px
        no-repeat,
      linear-gradient(#fff, #fff) right 2px / 1px 12px no-repeat;
  }

  td {
    font-size: 12px;
  }

  td + td {
    padding-left: 6px;
  }

  .num {
    padding-right: 10px;
    text-align: right;
  }
`;

const Row = styled.tr`
  background: ${({ $selected }) => ($selected ? NAVY : "#fff")};
  color: ${({ $selected }) => ($selected ? "#fff" : "#000")};
  outline: ${({ $focused, $selected }) =>
    $focused ? `1px dashed ${$selected ? "#f5d98c" : "#000"}` : "none"};
  outline-offset: -1px;
`;

const Option = styled.label`
  display: flex;
  align-items: center;
  gap: 4px;
  min-width: ${({ $wide }) => ($wide ? "119px" : "84px")};
  white-space: nowrap;

  & + & {
    margin-left: -7px;
  }
`;

const Check = styled.input.attrs({ type: "checkbox" })`
  ${sunken}
  width: 13px;
  height: 13px;
  appearance: none;
  background: #fff ${CHECK} center no-repeat;
`;

const Radio = styled.input.attrs({ type: "radio" })`
  width: 12px;
  height: 12px;
  appearance: none;
  border: 1px solid;
  border-color: ${SHADOW} #fff #fff ${SHADOW};
  border-radius: 50%;
  box-shadow: inset 1px 1px ${DARK};
  background: #fff;

  &:checked {
    background: radial-gradient(circle, #000 2px, #fff 3px);
  }
`;

const BottomTabs = styled.div`
  display: flex;
  flex: none;
  height: 21px;
  padding-left: 4px;
  border-top: 1px solid #000;
  background: #f5f1e9;
`;

const BottomTab = styled.button`
  display: flex;
  align-items: center;
  gap: 3px;
  flex: none;
  width: ${({ $width }) => $width}px;
  height: ${({ $active }) => ($active ? "20px" : "19px")};
  margin-top: ${({ $active }) => ($active ? "-1px" : 0)};
  padding: 0 0 0 6px;
  border: 0;
  background: ${({ $active }) =>
    $active
      ? FACE
      : "linear-gradient(#808080, #808080) right 0 top 2px / 1px 15px no-repeat"};
  box-shadow: ${({ $active }) =>
    $active ? "inset -1px 0 #000, inset 0 -1px #000" : "none"};
  color: ${({ $active }) => ($active ? "#000" : "#5c5a56")};
  white-space: nowrap;
`;

const StatusBar = styled.footer`
  display: flex;
  align-items: center;
  flex: none;
  height: 21px;
  padding: 0 0 0 4px;
`;

const StatusCell = styled.span`
  width: 8px;
  height: 18px;
  margin-right: 5px;
  border: 1px solid ${SHADOW};
`;

/* ---------- content ---------- */

const menus = [
  ["ファイル", "F", 65],
  ["編集", "E", 55],
  ["表示", "V", 56],
  ["ビュー", "O", 59],
  ["ツール", "T", 59],
  ["評価", "A", 56],
  ["WR", "R", 50],
  ["人体", "U", 55],
  ["アニメーション", "N", 93],
  ["ウィンドウ", "W", 77],
  ["ヘルプ", "H", 60],
];

// guides: one entry per indent level, "+"/"-" draws the expander
const treeRows = [
  ["through", "through", "end+", "part", "handle1"],
  ["through", "node+", "part", "SW_Cover"],
  ["through", "node+", "assy", "Motor_driver"],
  ["through", "node+", "part", "mount_rail %3"],
  ["through", "node+", "part", "ControllerCover"],
  ["through", "node+", "part", "CN-DSSZ3F_DMS %1"],
  ["through", "node+", "part", "CN-DSSZ3F_DMS %2"],
  ["through", "node+", "part", "CN-DSSZ3F_DMS %3"],
  ["through", "node+", "assy", "ControlBoard"],
  ["through", "end+", "part", "Routing_Target(CN501)"],
  ["node-", "assy", "WR_Pallet_Assembly"],
  ["through", "end+", "part", "WR_Pallet_Part"],
  ["node-", "harness", "Harness_Group"],
  ["through", "node-", "harness", "Harness-1"],
  ["through", "through", "end", "wire", "W1"],
  ["through", "node-", "harness", "Harness-2"],
];

const results = [1, 2, 3, 4, 5];

const tabs = [
  ["parts", "パーツリス...", 84],
  ["assembly", "アセンブリ...", 84],
  ["notes", "注記リスト", 82],
  ["dims", "寸法リスト", 82],
  ["process", "工程リスト", 82],
  ["explodeParts", "分解パー...", 84],
  ["explodeAsm", "分解アセ...", 84],
  ["annotView", "注釈ビュ...", 80],
  ["anime", "アニメー...", 76],
  ["clash", "干渉チェ...", 80],
  ["ratsnest", "ラッツネッ...", 80],
  ["terminal", "端子リスト", 82],
  ["drc", "DRC リスト", 86],
  ["gear", "機構シミ...", 82],
];

const PinIcon = () => (
  <Svg width="9" height="10" shapeRendering="crispEdges" aria-hidden="true">
    <path d="M2 0h5v5h1v1H5v3H4V6H1V5h1zM3 1v4h2V1z" fillRule="evenodd" />
  </Svg>
);

const CloseIcon = ({ size = 8 }) => (
  <Svg width={size} height={size} viewBox="0 0 8 8" aria-hidden="true">
    <path d="M.5.5l7 7M7.500.5l-7 7" stroke="#000" strokeWidth="1.600" />
  </Svg>
);

const Header = ({ title }) => (
  <PaneHeader>
    <h2>{title}</h2>
    <FlatButton $width={16} aria-label="ピン留め">
      <PinIcon />
    </FlatButton>
    <FlatButton $width={14} aria-label="閉じる">
      <CloseIcon />
    </FlatButton>
  </PaneHeader>
);

const TreeItem = ({ row }) => {
  const guides = row.slice(0, -2);
  const [icon, name] = row.slice(-2);
  return (
    <TreeRow>
      {guides.map((g, i) => {
        const sign = /[+-]$/.test(g) ? g.slice(-1) : null;
        return (
          <Guide key={i} $line={sign ? g.slice(0, -1) : g}>
            {sign && (
              <Expander aria-label={sign === "+" ? "展開" : "折りたたみ"}>
                <Svg width="5" height="5" shapeRendering="crispEdges">
                  <path d={sign === "+" ? "M0 2h5v1H0zM2 0h1v5H2z" : "M0 2h5v1H0z"} />
                </Svg>
              </Expander>
            )}
          </Guide>
        );
      })}
      <label>
        <TreeCheck defaultChecked />
        <Svg width="15" height="14" viewBox="0 0 15 14" aria-hidden="true">
          {treeIcons[icon]}
        </Svg>
        {name}
      </label>
    </TreeRow>
  );
};

const Warning = ({ x, y }) => (
  <g transform={`translate(${x} ${y})`}>
    <path d="M0-10L11 9h-22z" fill="#ffff10" stroke="#444" />
    <path d="M-2-4h4l-1 7h-2z" fill="#000" />
    <circle cy="6" r="1.500" fill="#000" />
  </g>
);

// cable centre line as cubic segments, from the collar to the ring
const cableCurve = [
  [592, 306, 640, 291, 690, 281, 718, 273],
  [718, 273, 748, 265, 775, 256, 800, 243],
  [800, 243, 828, 226, 838, 207, 837, 182],
  [837, 182, 837, 172, 828, 166, 817, 158],
];

const cubic = (a, b, c, d, t) => {
  const s = 1 - t;
  return s * s * s * a + 3 * s * s * t * b + 3 * s * t * t * c + t * t * t * d;
};

const cablePoints = cableCurve.flatMap(([x0, y0, x1, y1, x2, y2, x3, y3], seg) =>
  Array.from({ length: 13 }, (_, i) => ({
    x: cubic(x0, x1, x2, x3, i / 12),
    y: cubic(y0, y1, y2, y3, i / 12),
    half: seg < 2 ? 14.5 : Math.max(10.5, 14.5 - (seg - 2 + i / 12) * 3.5),
  }))
).filter((p, i, all) => !i || p.x !== all[i - 1].x || p.y !== all[i - 1].y);

// outline of the tube, narrowed by scale and nudged across by shift
const tube = (scale, shift = 0) => {
  const left = [];
  const right = [];
  cablePoints.forEach((p, i) => {
    const a = cablePoints[Math.max(i - 1, 0)];
    const b = cablePoints[Math.min(i + 1, cablePoints.length - 1)];
    const len = Math.hypot(b.x - a.x, b.y - a.y);
    const nx = -(b.y - a.y) / len;
    const ny = (b.x - a.x) / len;
    const l = p.half * (shift - scale);
    const r = p.half * (shift + scale);
    left.push(`${(p.x + nx * l).toFixed(1)} ${(p.y + ny * l).toFixed(1)}`);
    right.unshift(`${(p.x + nx * r).toFixed(1)} ${(p.y + ny * r).toFixed(1)}`);
  });
  return `M${left.concat(right).join("L")}z`;
};

const cableShades = [
  [1, "#053005"],
  [0.94, "#066006"],
  [0.87, "#058405"],
  [0.78, "#04a004"],
  [0.66, "#03b803"],
  [0.52, "#03cc03"],
  [0.38, "#02de02"],
  [0.22, "#02ee02"],
];

const Scene = () => (
  <svg viewBox="273 99 885 294" preserveAspectRatio="xMaxYMid slice" role="img" aria-label="3D View">
    <defs>
      <linearGradient id="cover" x1="0" y1="0" x2="1" y2="0.300">
        <stop offset="0" stopColor="#7d7b9a" />
        <stop offset=".45" stopColor="#85839f" />
        <stop offset="1" stopColor="#797790" />
      </linearGradient>
      <linearGradient id="collarBlue" x1="0.200" y1="0" x2=".6" y2="1">
        <stop offset="0" stopColor="#1c2c3c" />
        <stop offset=".25" stopColor="#35587c" />
        <stop offset=".6" stopColor="#4a7cac" />
        <stop offset="1" stopColor="#3c668e" />
      </linearGradient>
      <linearGradient id="collarGray" x1="0.200" y1="0" x2=".6" y2="1">
        <stop offset="0" stopColor="#2c2c2c" />
        <stop offset=".3" stopColor="#747474" />
        <stop offset=".65" stopColor="#9c9c9c" />
        <stop offset="1" stopColor="#6c6c6c" />
      </linearGradient>
      <linearGradient id="ringBlue" x1=".6" y1="0" x2=".2" y2="1">
        <stop offset="0" stopColor="#4f86bc" />
        <stop offset=".55" stopColor="#4676a6" />
        <stop offset="1" stopColor="#142030" />
      </linearGradient>
      <linearGradient id="elbow" x1="0" y1=".2" x2=".7" y2=".7">
        <stop offset="0" stopColor="#5c0606" />
        <stop offset=".25" stopColor="#d80808" />
        <stop offset=".55" stopColor="#fa0a0a" />
        <stop offset="1" stopColor="#c00808" />
      </linearGradient>
      <linearGradient id="stub">
        <stop offset="0" stopColor="#00b800" />
        <stop offset=".25" stopColor="#00ec00" />
        <stop offset=".6" stopColor="#00b000" />
        <stop offset="1" stopColor="#001800" />
      </linearGradient>
      <filter id="soft" x="-30%" y="-30%" width="160%" height="160%">
        <feGaussianBlur stdDeviation="2" />
      </filter>
      <clipPath id="coverClip">
        <path d="M609 393Q608 376 620 370L720 315Q732 309 735 300Q737 292 745 287L826 247Q832 245 838 249L867 272Q876 280 874 290L870 296L800 346L790 358L777 373L753 393z" />
      </clipPath>
    </defs>

    <path d="M273 99H997L777 393H273z" fill="#5a5a5a" />

    <path d="M753 393L777 373L800 346L870 296L793 393z" fill="#62627a" />
    <g clipPath="url(#coverClip)">
      <path d="M600 240h280v160H600z" fill="url(#cover)" />
      <path d="M620 370L735 308L742 316L636 372zM748 287L828 247L842 256L760 297z" fill="#757390" />
      <g filter="url(#soft)" fill="none" strokeLinecap="round">
        <path d="M745 393L778 362L797 341L872 287" stroke="#a5a3cc" strokeWidth="13" />
        <path d="M730 315L776 361" stroke="#b0aeda" strokeWidth="9" />
        <path d="M738 306L785 352" stroke="#8684a4" strokeWidth="4" />
        <path d="M748 294L794 341" stroke="#bebce8" strokeWidth="12" />
        <path d="M615 376L632 396" stroke="#aaa8d4" strokeWidth="16" />
        <path d="M611 376L720 314Q733 307 737 298Q741 288 828 246" stroke="#5e5c74" strokeWidth="3" />
      </g>
      <g filter="url(#soft)" fill="#cdcbff">
        <circle cx="793" cy="341" r="6" />
        <circle cx="778" cy="362" r="6" />
      </g>
    </g>

    <path d="M818 139C824 133 833 131 836 138L836 147L828 150z" fill="#1c1c1c" />
    <path d="M818 139L832 134L829 146z" fill="#505050" />
    <path d="M818 139C806 147 798 163 798 177C802 182 810 184 815 183C826 180 835 160 837 149C832 143 824 140 818 139z" fill="url(#ringBlue)" />
    <path d="M835 150C826 148 809 164 811 182C821 180 835 165 835 150z" fill="#22384e" />
    <path d="M811 172L813 182L822 180L826 174z" fill="#5288bc" />
    {cableShades.map(([scale, color]) => (
      <path key={scale} d={tube(scale, 0)} fill={color} />
    ))}
    <path d="M824 181L825 175L834 169L844 168L848 174L849 179L836 179L826 184z" fill="#d01010" />
    <path d="M824 177L834 169L843 168M826 184L835 179L849 179" fill="none" stroke="#ddd" strokeWidth="2" />

    <path d="M527 296C532 294 547 314 553 338C558 355 555 361 549 358C540 352 526 318 527 296z" fill="#1c3044" stroke="#5488b8" strokeWidth="2" />
    <path d="M533 309C543 309 551 326 550 342L545 344z" fill="#02b402" />
    <path d="M498 374L517 376L537 368L541 393H503z" fill="url(#stub)" />
    <path d="M533 309C512 314 494 330 492 354L495 372L510 376L528 370L538 352L546 345C544 330 539 316 533 309z" fill="url(#elbow)" />
    <path d="M531 310C539 318 544 332 546 345M495 373L510 376L529 370" fill="none" stroke="#ddd" strokeWidth="3" />
    <path d="M528 295L555 287C568 298 577 325 576 348L552 359C553 335 541 306 528 295z" fill="url(#collarBlue)" />
    <path d="M555 287L575 280C588 287 598 310 598 330Q597 338 595 340L576 348C577 325 568 298 555 287z" fill="url(#collarGray)" />

    <Warning x={850} y={187} />
    <Warning x={528} y={358} />

    <g fill="none" strokeWidth="1.200">
      <path d="M1099 158L1114 153" stroke="#00e8e8" />
      <path d="M1099 158L1094 173" stroke="#00d800" strokeWidth="2" />
      <path d="M1099 158L1118 175" stroke="#e00000" />
    </g>
    <g fontSize="17" fontFamily="Noto Sans CJK JP, sans-serif" fontWeight="300">
      <text x="1097" y="157">W</text>
      <text x="1112" y="152">Z</text>
      <text x="1091" y="173">Y</text>
      <text x="1117" y="176">X</text>
    </g>
  </svg>
);

export default function App() {
  return (
    <Window>
      <GlobalStyle />
      <TitleBar>
        <Svg width="16" height="16" aria-hidden="true">
          <circle cx="8" cy="8" r="8" fill="#241808" />
          <path d="M2 4l3 4M5 4L2 8M6 4l2 4 2-4M11 4v4h3" fill="none" stroke="#e02818" strokeWidth="1.500" />
          <path d="M3 10h4v4H3zM9 9v5M8 11h6M12 9v6" fill="none" stroke="#e8a828" strokeWidth="1.500" />
        </Svg>
        <h1>Controller_cable.xv2* - XVL Studio WR - [&lt;3D View - 前&gt;]</h1>
        <CaptionButton aria-label="最小化">
          <Svg width="8" height="8"><path d="M0 6h6v2H0z" /></Svg>
        </CaptionButton>
        <CaptionButton aria-label="最大化">
          <Svg width="9" height="9"><path d="M0 0h9v9H0zM1 2v6h7V2z" fillRule="evenodd" /></Svg>
        </CaptionButton>
        <CaptionButton $spaced aria-label="閉じる">
          <CloseIcon />
        </CaptionButton>
      </TitleBar>

      <MenuBar>
        <Grip />
        <FlatButton $width={24} aria-label="XVL">
          <Svg width="16" height="16">
            <path d="M5 1h6l4 4v10H5z" fill="#f4f8d8" stroke="#506030" />
            <path d="M11 1v4h4" fill="#c0d080" stroke="#506030" />
            <path d="M1 1h6v14H1z" fill="#181408" />
            <path d="M2 3l4 3M6 3L2 6M2 8h3l1 1-1 1H2M2 12h4" fill="none" stroke="#f0c820" />
          </Svg>
        </FlatButton>
        {menus.map(([name, key, width]) => (
          <MenuItem key={key} $width={width}>
            {name}(<u>{key}</u>)
          </MenuItem>
        ))}
        <Spacer />
        <FlatButton aria-label="最小化">
          <Svg width="8" height="8"><path d="M1 6h6v2H1z" /></Svg>
        </FlatButton>
        <FlatButton aria-label="元に戻す">
          <Svg width="9" height="9">
            <path d="M3 0h6v6H6v3H0V3h3zM4 2v1h2v2h2V2zM1 5v3h4V5z" fillRule="evenodd" />
          </Svg>
        </FlatButton>
        <FlatButton $width={14} aria-label="閉じる">
          <CloseIcon size={9} />
        </FlatButton>
      </MenuBar>

      <ToolbarArea>
        <ToolbarRow>
          <Toolbar>
            <Grip />
            <Tools items={["open", "save", "|", "undo", "redo"]} />
            <More />
          </Toolbar>
          <Toolbar>
            <Grip />
            <Tools
              items={[
                "home", "|", "move", "*rotate", "zoom", "zoomArea", "reload", "|",
                "pickPart", "pickShape", "pickLine", "pickFace", "pickBody", "v", "|",
                "balls", "ballFit", "|", "layers", "noteEdit", "noteLabel", "measure",
              ]}
            />
            <More />
          </Toolbar>
          <Toolbar>
            <Grip />
            <Tools items={["bucket"]} />
            <Caret disabled aria-label="透明度メニュー" />
            <ToolSelect $width={100} disabled aria-label="透明度">
              <option>10%</option>
            </ToolSelect>
            <More />
          </Toolbar>
          <Toolbar>
            <Grip />
            <Tools
              items={["alignGap", "v", "|", "gather", "v", "|", "dial", "v", "|", "alignTurn", "v"]}
            />
            <More />
          </Toolbar>
          <Toolbar $grow>
            <Grip />
            <Tools items={["section", "v"]} />
            <ToolSelect $width={150} disabled aria-label="位置">
              <option>位置を選択</option>
            </ToolSelect>
            <Tools items={["sectionOff"]} />
            <Caret disabled aria-label="断面メニュー" />
            <Spacer />
            <More wide />
          </Toolbar>
        </ToolbarRow>
        <ToolbarRow>
          <Toolbar>
            <Grip />
            <Tools
              items={["*winTree", "winImage", "winFlow", "winDown", "v", "*winEdit", "winBook"]}
            />
            <More />
          </Toolbar>
          <Toolbar>
            <Grip />
            <Tools
              items={[
                "look", "fit", "|", "front", "back", "right", "left", "top", "bottom",
                "iso", "v", "turnLeft", "turnRight",
              ]}
            />
            <More />
          </Toolbar>
          <Toolbar>
            <Grip />
            <Tools
              items={["wire", "*shade", "shadeEdge", "hidden", "v", "point", "|", "colorMap", "v"]}
            />
            <ToolSelect $width={119} aria-label="カラーセット">
              <option>[ カラーセット ]</option>
            </ToolSelect>
            <Tools items={["ball", "v", "|", "monitor"]} />
            <More />
          </Toolbar>
          <Toolbar>
            <Grip />
            <TextButton $width={124}>経路検討パートの配置...</TextButton>
            <TextButton $width={100}>経路ガイドの配置...</TextButton>
            <TextButton $width={62}>配線検討...</TextButton>
            <More />
          </Toolbar>
        </ToolbarRow>
      </ToolbarArea>

      <Main>
        <TreePane>
          <Header title="構成ツリー" />
          <TreeFrame>
            <Tree>
              {treeRows.map((row) => (
                <TreeItem key={row[row.length - 1]} row={row} />
              ))}
            </Tree>
            <VScroll>
              <Arrow dir="up" />
              <Track $size={25} />
              <Thumb $size={74} />
              <Track $size={117} />
              <Arrow dir="down" />
            </VScroll>
          </TreeFrame>
          <PaneTabs>
            <PaneTab>
              <Svg width="16" height="16" aria-hidden="true">{tabIcons.tree}</Svg>
              構成ツリー
            </PaneTab>
          </PaneTabs>
        </TreePane>
        <View>
          <Scene />
        </View>
      </Main>

      <EditPanel>
        <Header title="編集パネル" />
        <EditBody>
          <Column>
            <Line>
              <Caption $inset={6} $width="142px">ケーブルチェックルールリスト</Caption>
              <PushButton>インポート...</PushButton>
              <PushButton>エクスポート...</PushButton>
            </Line>
            <ListFrame $column>
              <ListView>
                <Table $width={560}>
                  <colgroup>
                    <col width="110" />
                    <col width="65" />
                    <col width="70" />
                    <col width="75" />
                    <col />
                  </colgroup>
                  <thead>
                    <tr>
                      <th>名称</th>
                      <th>状態</th>
                      <th>種類</th>
                      <th className="num">NG 数</th>
                      <th>コメント</th>
                    </tr>
                  </thead>
                  <tbody>
                    <Row $focused>
                      <td>DesignRule-1</td>
                      <td>実行済</td>
                      <td>曲げ半径</td>
                      <td className="num">6</td>
                      <td />
                    </Row>
                  </tbody>
                </Table>
              </ListView>
              <HScroll>
                <Arrow dir="left" />
                <Thumb $size={398} />
                <Track $size={19} />
                <Arrow dir="right" />
              </HScroll>
            </ListFrame>
            <Line>
              <PushButton>追加...</PushButton>
              <PushButton disabled>編集...</PushButton>
              <PushButton disabled>コピー</PushButton>
              <PushButton disabled>削除</PushButton>
            </Line>
            <Line>
              <PushButton disabled>参照</PushButton>
              <PushButton disabled>チェック実行</PushButton>
            </Line>
          </Column>
          <Divider />
          <Column $right>
            <Line>
              <Caption $inset={2}>チェック結果リスト</Caption>
            </Line>
            <ListFrame>
              <ListView>
                <Table $width={484}>
                  <colgroup>
                    <col width="54" />
                    <col width="100" />
                    <col width="100" />
                    <col width="80" />
                    <col width="150" />
                  </colgroup>
                  <thead>
                    <tr>
                      <th>No</th>
                      <th>ルール名称</th>
                      <th>チェック対象</th>
                      <th>判定値</th>
                      <th>コメント</th>
                    </tr>
                  </thead>
                  <tbody>
                    {results.map((n) => (
                      <Row key={n} $selected={n === 2 || n === 3} $focused={n === 3}>
                        <td>{n}</td>
                        <td>DesignRule-1</td>
                        <td>W1</td>
                        <td>NG</td>
                        <td />
                      </Row>
                    ))}
                  </tbody>
                </Table>
              </ListView>
              <VScroll>
                <Arrow dir="up" />
                <Thumb $size={60} />
                <Track $size={12} />
                <Arrow dir="down" />
              </VScroll>
            </ListFrame>
            <Line>
              <Caption $inset={2} $width="79px">チェック箇所</Caption>
              <Option>
                <Check defaultChecked />
                フィット表示
              </Option>
              <Option>
                <Check defaultChecked />
                カラーマップ表示
              </Option>
              <Spacer />
              <Option $wide>
                <Check defaultChecked />
                NG 結果のみ表示
              </Option>
              <PushButton>閉じる</PushButton>
            </Line>
            <Line>
              <Caption $inset={2} $width="79px">他パート</Caption>
              <Option>
                <Radio name="others" defaultChecked />
                そのまま
              </Option>
              <Option>
                <Radio name="others" />
                非表示
              </Option>
              <Option>
                <Radio name="others" />
                半透明表示
              </Option>
            </Line>
          </Column>
        </EditBody>
      </EditPanel>

      <BottomTabs role="tablist">
        {tabs.map(([icon, name, width]) => (
          <BottomTab
            key={icon}
            role="tab"
            aria-selected={icon === "drc"}
            $active={icon === "drc"}
            $width={width}
          >
            <Svg width="16" height="16" aria-hidden="true">{tabIcons[icon]}</Svg>
            {name}
          </BottomTab>
        ))}
      </BottomTabs>

      <StatusBar>
        <span>レディ</span>
        <Spacer />
        <StatusCell />
        <Svg width="13" height="13" aria-hidden="true">
          <path d="M1 13L13 1M5 13l8-8M9 13l4-4" stroke="#fff" strokeWidth="1.500" />
          <path d="M2 13L13 2M6 13l7-7M10 13l3-3" stroke="#808080" strokeWidth="1.500" />
        </Svg>
      </StatusBar>
    </Window>
  );
}
